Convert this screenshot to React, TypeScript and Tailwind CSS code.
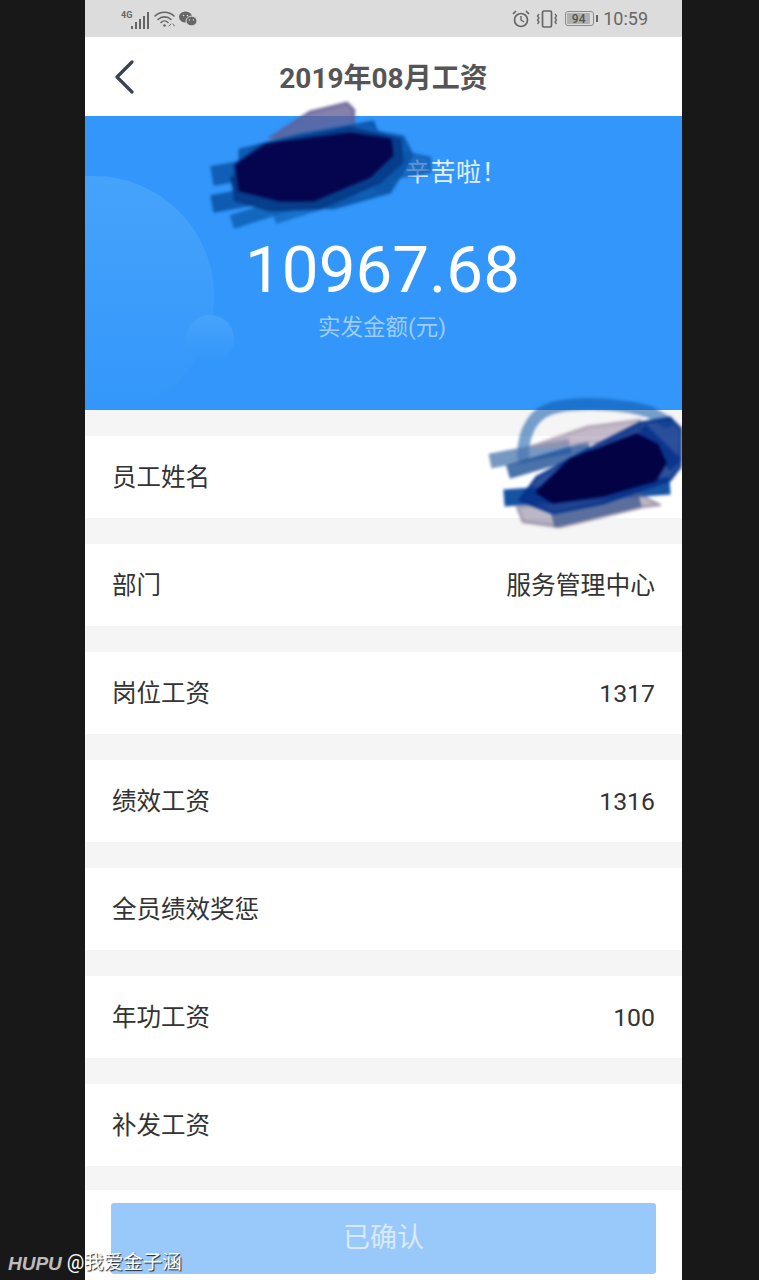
import React from 'react';

const FONT = "font-['Roboto','Noto_Sans_CJK_SC',sans-serif]";

const rows = [
  { label: '员工姓名', value: '' },
  { label: '部门', value: '服务管理中心' },
  { label: '岗位工资', value: '1317' },
  { label: '绩效工资', value: '1316' },
  { label: '全员绩效奖惩', value: '' },
  { label: '年功工资', value: '100' },
  { label: '补发工资', value: '' },
];

// [points, color, opacity]
type Blot = [string, string, number];
// [x1, y1, x2, y2, width, color, opacity]
type Stroke = [number, number, number, number, number, string, number];

const topBlots: Blot[] = [
  ['270,138 310,112 347,103 354,110 353,132', '#625f94', 0.78],
  ['393,150 430,158 430,172 393,178 388,190 375,190', '#0a55a8', 0.6],
  ['240,150 300,135 373,122 377,132 403,137 412,155 400,176 390,192 333,208 280,205 240,195', '#0a55a8', 0.85],
  ['235,165 262,145 350,128 400,140 402,162 380,182 320,208 270,210 235,200', '#063a86', 0.85],
  ['237,165 267,145 350,134 390,140 392,155 370,176 313,200 280,200 240,190', '#05054f', 1],
];

const topStrokes: Stroke[] = [
  [212, 176, 300, 160, 20, '#0a55a8', 0.85],
  [212, 204, 310, 186, 18, '#0a55a8', 0.9],
  [232, 222, 320, 194, 14, '#0d5fb4', 0.85],
  [274, 217, 355, 192, 14, '#0d5fb4', 0.7],
  [232, 186, 300, 172, 18, '#06307c', 0.9],
];

const rightBlots: Blot[] = [
  ['530,447 587,427 640,420 640,440', '#a090a8', 0.6],
  ['517,507 523,522 560,527 643,507 660,505 637,493 553,503', '#6b6080', 0.45],
  ['520,500 537,477 587,450 640,423 670,418 682,430 680,467 670,480 603,503 553,513', '#05308a', 0.85],
  ['537,492 570,460 637,435 657,445 665,463 655,480 603,495 553,502', '#020245', 1],
];

const rightStrokes: Stroke[] = [
  [490, 461, 570, 446, 15, '#4a76ad', 0.75],
  [508, 472, 590, 448, 14, '#1d4f96', 0.8],
  [504, 498, 670, 486, 17, '#0a4a9e', 0.95],
  [553, 521, 640, 500, 14, '#12509e', 0.75],
  [640, 430, 676, 465, 16, '#05308a', 0.8],
];

const StatusBar = () => (
  <div className="h-[37px] bg-[#dcdcdc] flex items-center justify-between pl-[36px] pr-[34px] text-[#666]">
    <div className="flex items-center gap-[4px]">
      <svg width="29" height="20" viewBox="0 0 29 20">
        <text x="0" y="9" fontSize="9" fontWeight="700" fill="#666" fontFamily="Roboto">4G</text>
        <rect x="10" y="17" width="2" height="3" fill="#666" />
        <rect x="14" y="13" width="2" height="7" fill="#666" />
        <rect x="18" y="10" width="2" height="10" fill="#666" />
        <rect x="22" y="7" width="2" height="13" fill="#666" />
        <rect x="26" y="3" width="2" height="17" fill="#666" />
      </svg>
      <svg width="21" height="18" viewBox="0 0 21 18" fill="none" stroke="#666" strokeWidth="1.600" strokeLinecap="round">
        <path d="M1 6c5-5 14-5 19 0" />
        <path d="M4 9.500c3.500-3.500 9.500-3.500 13 0" />
        <path d="M7 12.500c2-2 5-2 7 0" />
        <circle cx="10.500" cy="15.500" r="1.300" fill="#666" stroke="none" />
        <path d="M15 16l2-2M19 14l1.500 2" strokeWidth="1" />
      </svg>
      <svg width="18" height="16" viewBox="0 0 18 16" fill="#666">
        <ellipse cx="6.500" cy="6" rx="6.500" ry="5.500" />
        <ellipse cx="12.500" cy="10" rx="5.500" ry="4.800" stroke="#dcdcdc" strokeWidth="1" />
        <circle cx="4.500" cy="4.500" r="0.800" fill="#dcdcdc" />
        <circle cx="8.500" cy="4.500" r="0.800" fill="#dcdcdc" />
        <circle cx="10.500" cy="9" r="0.700" fill="#dcdcdc" />
        <circle cx="14.500" cy="9" r="0.700" fill="#dcdcdc" />
      </svg>
    </div>
    <div className="flex items-center">
      <svg width="18" height="18" viewBox="0 0 18 18" fill="none" stroke="#666" strokeWidth="1.700" className="mr-[6px]">
        <circle cx="9" cy="10" r="6.500" />
        <path d="M9 6v4l3 2" strokeWidth="1.400" />
        <path d="M1 4l3-3M17 4l-3-3" />
      </svg>
      <svg width="22" height="18" viewBox="0 0 22 18" fill="none" stroke="#666" className="mr-[7px]">
        <rect x="6.500" y="1" width="9" height="16" rx="1.500" strokeWidth="1.700" />
        <path d="M3 4l-1.500 2L3 8 1.500 10 3 12l-1.500 2M19 4l1.500 2L19 8l1.500 2-1.500 2 1.500 2" strokeWidth="1.300" />
      </svg>
      <div className="flex items-center mr-[5px]">
        <div className="w-[29px] h-[15px] rounded-[3px] border border-[#8a8a8a] bg-[#dcdcdc] p-px">
          <div className="h-full w-[92%] bg-[#b0b0b0] rounded-[1px] flex items-center justify-center text-[12px] leading-none font-medium text-[#555]">94</div>
        </div>
        <div className="w-[2px] h-[7px] bg-[#666] ml-[2px]" />
      </div>
      <span className="text-[18px] leading-none text-[#666]">10:59</span>
    </div>
  </div>
);

const Header = () => (
  <div className="relative h-[79px] bg-white flex items-center justify-center">
    <svg width="22" height="34" viewBox="0 0 22 34" fill="none" stroke="#3a4450" strokeWidth="3.200" strokeLinecap="round" strokeLinejoin="round" className="absolute left-[29px] top-[23px]">
      <path d="M18 2 3 17l15 15" />
    </svg>
    <h1 className="text-[28px] font-bold text-[#555] leading-none mt-[5px]">2019年08月工资</h1>
  </div>
);

const Banner = () => (
  <div className="relative h-[294px] bg-[#3296fa] overflow-hidden flex flex-col items-center">
    <div className="absolute left-[-111px] top-[60px] w-[240px] h-[240px] rounded-full bg-gradient-to-b from-[#46a3fb] to-[#3296fa]" />
    <div className="absolute left-[101px] top-[199px] w-[48px] h-[48px] rounded-full bg-gradient-to-b from-[#47a3fb] to-[#3296fa]" />
    <p className="relative w-full text-[25px] leading-none text-[#e4f0fe] text-right pr-[175px] mt-[44px] tracking-[0.5px]">辛苦啦！</p>
    <p className="relative text-[65.500px] leading-none text-white mt-[52px] mr-[2px]">10967.68</p>
    <p className="relative text-[22.500px] leading-none text-[#9fcdfb] mt-[13px] mr-[3px]">实发金额(元)</p>
  </div>
);

const Row = ({ label, value }: { label: string; value: string }) => (
  <div className="h-[82px] bg-white flex items-center justify-between px-[27px] pt-[2px] text-[#333] leading-none">
    <span className="text-[24.500px]">{label}</span>
    <span className="text-[24.800px]">{value}</span>
  </div>
);

const Scribble = ({ blots, strokes }: { blots: Blot[]; strokes: Stroke[] }) => (
  <>
    {strokes.map(([x1, y1, x2, y2, w, c, o], i) => (
      <line key={i} x1={x1} y1={y1} x2={x2} y2={y2} stroke={c} strokeWidth={w} strokeOpacity={o} />
    ))}
    {blots.map(([points, c, o], i) => (
      <polygon key={i} points={points} fill={c} fillOpacity={o} stroke={c} strokeOpacity={o} strokeWidth="3" strokeLinejoin="round" />
    ))}
  </>
);

export default function App() {
  return (
    <div className={`relative w-[759px] h-[1280px] bg-[#181818] overflow-hidden ${FONT}`}>
      <div className="relative ml-[85px] w-[597px] h-[1280px] bg-[#f5f5f5] overflow-hidden flex flex-col">
        <StatusBar />
        <Header />
        <Banner />
        <div className="flex flex-col gap-[26px] pt-[26px]">
          {rows.map((r) => <Row key={r.label} label={r.label} value={r.value} />)}
        </div>
        <div className="mt-[24px] flex-1 bg-white px-[26px] pt-[13px]">
          <div className="h-[71px] rounded-[3px] bg-[#99c9fb] flex items-center justify-center text-[27px] text-[#d9eafd]">已确认</div>
        </div>
        {/* hand-drawn redaction over the name */}
        <svg width="597" height="1280" viewBox="85 0 597 1280" className="absolute left-0 top-0 pointer-events-none blur-[1.500px]">
          <Scribble blots={topBlots} strokes={topStrokes} />
          <path d="M523 457c0-28 12-46 34-50 30-6 70-2 93 5l17 10" fill="none" stroke="#0d55a8" strokeOpacity="0.55" strokeWidth="12" strokeLinecap="round" />
          <Scribble blots={rightBlots} strokes={rightStrokes} />
        </svg>
      </div>
      <div className="absolute left-[8px] top-[1251px] flex items-center h-[24px] text-[19.500px] leading-none text-white [text-shadow:1px_1px_1px_#222]">
        <span className="font-bold italic text-[#bdbdbd] text-[19px] mr-[5px] font-['Liberation_Sans','Noto_Sans_CJK_SC',sans-serif]">HUPU</span>
        <span>@我爱金子涵</span>
      </div>
    </div>
  );
}
